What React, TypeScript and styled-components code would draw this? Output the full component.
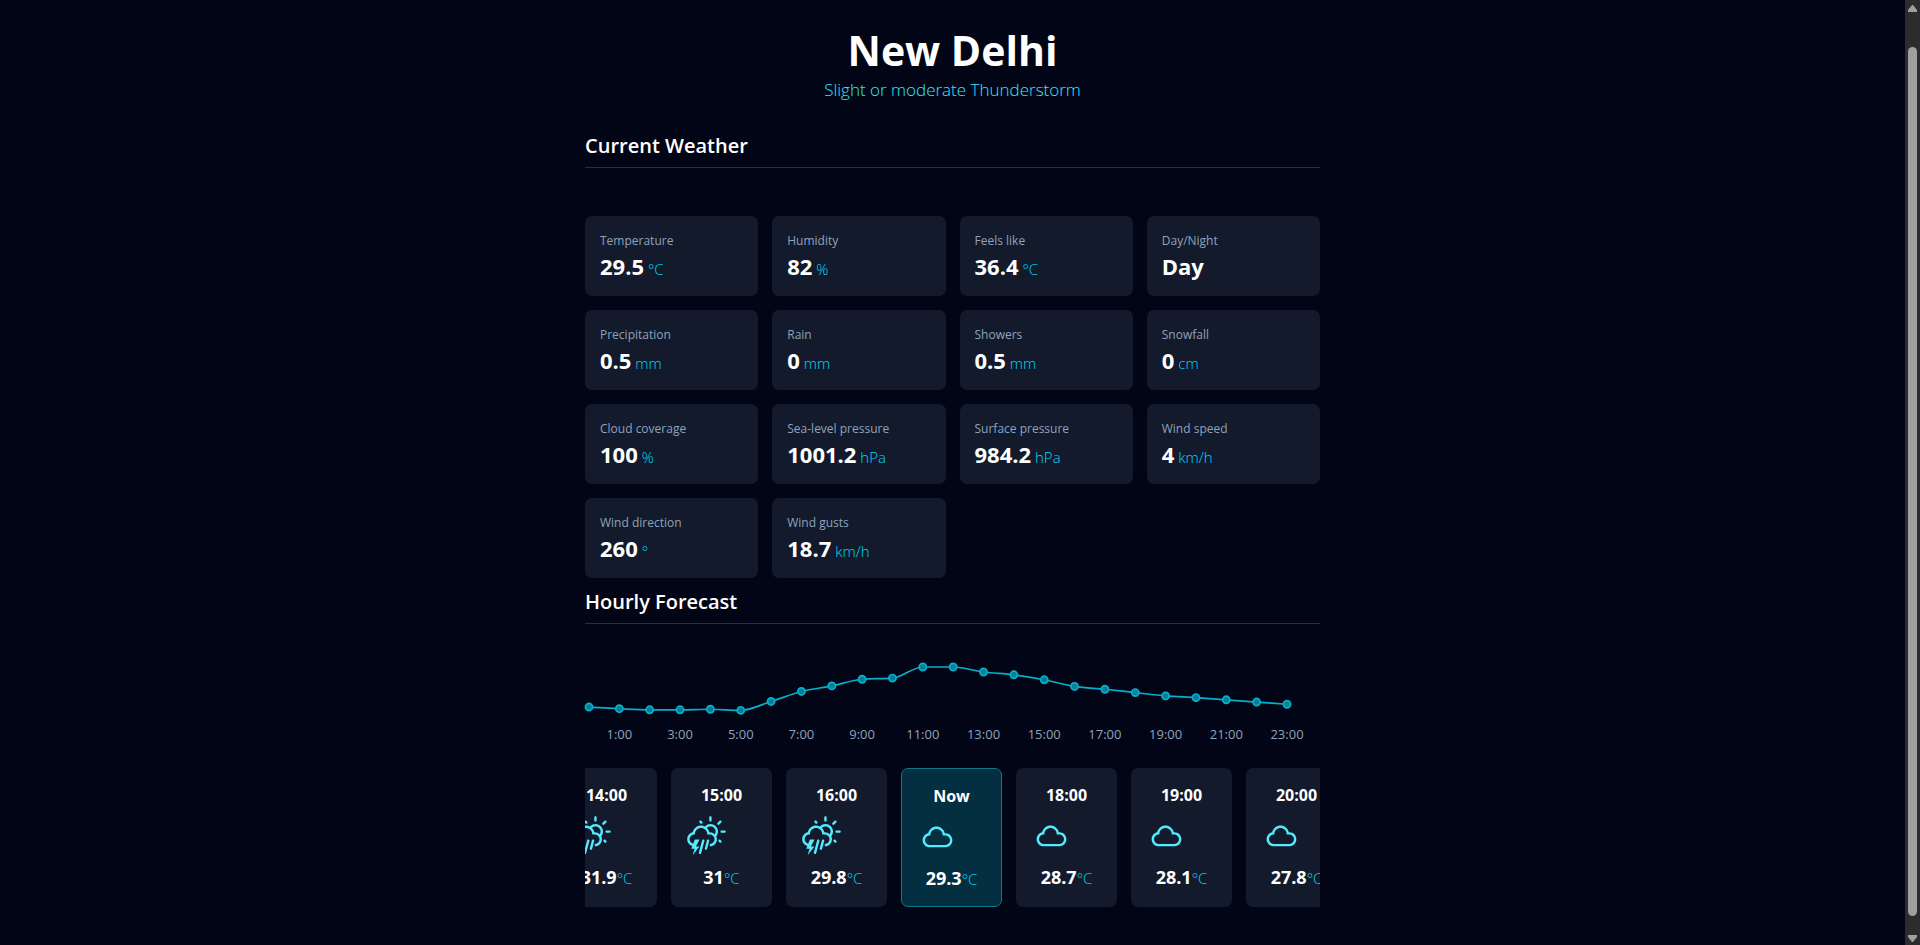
import { useLayoutEffect, useRef } from 'react';
import styled, { createGlobalStyle } from 'styled-components';
import { WiCloud, WiDayThunderstorm } from 'react-icons/wi';

const GlobalStyle = createGlobalStyle`
  *, *::before, *::after { box-sizing: border-box; }
  html, body { margin: 0; background: #020515; }
  body {
    font-family: 'Segoe UI', 'Open Sans', 'Noto Sans', sans-serif;
    color: #fff;
  }
  h1, h2, h3, p, dl, dt, dd, ul { margin: 0; padding: 0; }
`;

const Shell = styled.div`
  display: flex;
  min-height: 100vh;
`;

const Page = styled.main`
  flex: 1;
  min-width: 0;
  padding: 20px 16px 38px;
`;

const Content = styled.div`
  max-width: 735px;
  margin: 0 auto;
`;

const Hero = styled.header`
  text-align: center;
  margin-bottom: 28px;
`;

const City = styled.h1`
  font-size: 41px;
  line-height: 60px;
  font-weight: 700;
`;

const Summary = styled.p`
  font-size: 17px;
  line-height: 20px;
  font-weight: 300;
  color: #2fe8ff;
`;

const SectionTitle = styled.h2`
  font-size: 20px;
  line-height: 36px;
  height: 40px;
  font-weight: 600;
  border-bottom: 1px solid #053f4e;
`;

const MetricGrid = styled.dl`
  display: grid;
  grid-template-columns: repeat(4, 1fr);
  gap: 14px;
  padding: 48px 0 6px;

  @media (max-width: 640px) {
    grid-template-columns: repeat(2, 1fr);
  }
`;

const Metric = styled.div`
  background: #121a2c;
  border-radius: 7px;
  padding: 15px;
`;

const MetricLabel = styled.dt`
  font-size: 12px;
  line-height: 20px;
  color: #8fa3bc;
`;

const MetricValue = styled.dd`
  font-size: 22px;
  line-height: 30px;
  font-weight: 700;
`;

const Unit = styled.span`
  font-size: 15px;
  line-height: 1;
  font-weight: 300;
  color: #00d8fa;
`;

const Chart = styled.svg`
  display: block;
  width: 100%;
  height: auto;
  margin: 20px 0;
  overflow: visible;
`;

const ChartLine = styled.path`
  fill: none;
  stroke: #06b0cc;
  stroke-width: 1.7;
`;

const ChartDot = styled.circle`
  fill: #067f96;
  stroke: #06b0cc;
  stroke-width: 1.7;
`;

const ChartTick = styled.text`
  font-size: 13px;
  fill: #8fa3bc;
  text-anchor: middle;
`;

const HourStrip = styled.ul`
  display: flex;
  gap: 14px;
  overflow-x: auto;
  scrollbar-width: none;
  list-style: none;
`;

const HourCard = styled.li<{ $now?: boolean }>`
  flex: 0 0 101px;
  padding: 14px;
  border-radius: 7px;
  text-align: center;
  border: ${({ $now }) => ($now ? '1px solid #067a8c' : '0')};
  background: ${({ $now }) => ($now ? '#032f41' : '#121a2c')};
`;

const HourTime = styled.h3`
  font-size: 16px;
  line-height: 26px;
  font-weight: 700;
`;

const HourIcon = styled.div`
  display: flex;
  height: 56px;
  align-items: center;
  color: #53eafd;
`;

const HourTemp = styled.p`
  font-size: 18px;
  line-height: 27px;
  font-weight: 700;
`;

const ScrollRail = styled.div`
  flex: 0 0 15px;
  display: flex;
  flex-direction: column;
  align-items: center;
  justify-content: space-between;
  padding: 5px 0 3px;
  background: #2c2c2c;
`;

const ScrollThumb = styled.div`
  flex: 1;
  width: 9px;
  margin: 35px 0 19px;
  border-radius: 5px;
  background: #9f9f9f;
`;

const metrics: { label: string; value: string; unit?: string }[] = [
  { label: 'Temperature', value: '29.5', unit: '°C' },
  { label: 'Humidity', value: '82', unit: '%' },
  { label: 'Feels like', value: '36.4', unit: '°C' },
  { label: 'Day/Night', value: 'Day' },
  { label: 'Precipitation', value: '0.5', unit: 'mm' },
  { label: 'Rain', value: '0', unit: 'mm' },
  { label: 'Showers', value: '0.5', unit: 'mm' },
  { label: 'Snowfall', value: '0', unit: 'cm' },
  { label: 'Cloud coverage', value: '100', unit: '%' },
  { label: 'Sea-level pressure', value: '1001.2', unit: 'hPa' },
  { label: 'Surface pressure', value: '984.2', unit: 'hPa' },
  { label: 'Wind speed', value: '4', unit: 'km/h' },
  { label: 'Wind direction', value: '260', unit: '°' },
  { label: 'Wind gusts', value: '18.7', unit: 'km/h' },
];

const temperatures = [
  26.1, 25.8, 25.6, 25.6, 25.7, 25.5, 27.1, 28.9, 29.9, 31.1, 31.3, 33.3,
  33.3, 32.4, 31.9, 31, 29.8, 29.3, 28.7, 28.1, 27.8, 27.4, 27, 26.6,
];

const hours = [
  { time: '14:00', temp: 31.9, Icon: WiDayThunderstorm },
  { time: '15:00', temp: 31, Icon: WiDayThunderstorm },
  { time: '16:00', temp: 29.8, Icon: WiDayThunderstorm },
  { time: 'Now', temp: 29.3, Icon: WiCloud },
  { time: '18:00', temp: 28.7, Icon: WiCloud },
  { time: '19:00', temp: 28.1, Icon: WiCloud },
  { time: '20:00', temp: 27.8, Icon: WiCloud },
];

const STRIP_SCROLL = 29;

type Point = { x: number; y: number };

const points: Point[] = temperatures.map((t, i) => ({
  x: 4 + (i * 698) / 23,
  y: 23 + (33.3 - t) * 5.56,
}));

// Monotone cubic interpolation, so the curve never overshoots a reading.
function monotonePath(pts: Point[]): string {
  const slope = (a: Point, b: Point) => (b.y - a.y) / (b.x - a.x);
  const tangents = pts.map((p, i) => {
    if (i === 0) return slope(p, pts[1]);
    if (i === pts.length - 1) return slope(pts[i - 1], p);
    const before = slope(pts[i - 1], p);
    const after = slope(p, pts[i + 1]);
    if (before * after <= 0) return 0;
    const mean = (before + after) / 2;
    return Math.sign(mean) * Math.min(Math.abs(before), Math.abs(after), Math.abs(mean) / 2) * 2;
  });
  return pts.slice(1).reduce((d, p, i) => {
    const prev = pts[i];
    const third = (p.x - prev.x) / 3;
    return `${d}C${prev.x + third},${prev.y + third * tangents[i]} ${p.x - third},${p.y - third * tangents[i + 1]} ${p.x},${p.y}`;
  }, `M${pts[0].x},${pts[0].y}`);
}

function TemperatureChart() {
  return (
    <Chart viewBox="0 0 735 104" role="img" aria-label="Hourly temperature">
      <ChartLine d={monotonePath(points)} />
      {points.map((p, i) => (
        <ChartDot key={i} cx={p.x} cy={p.y} r={3.6} />
      ))}
      {points.map((p, i) =>
        i % 2 === 1 ? (
          <ChartTick key={i} x={p.x} y={95}>{`${i}:00`}</ChartTick>
        ) : null,
      )}
    </Chart>
  );
}

function HourlyStrip() {
  const strip = useRef<HTMLUListElement>(null);
  useLayoutEffect(() => {
    if (strip.current) strip.current.scrollLeft = STRIP_SCROLL;
  }, []);
  return (
    <HourStrip ref={strip}>
      {hours.map(({ time, temp, Icon }) => (
        <HourCard key={time} $now={time === 'Now'}>
          <HourTime>{time}</HourTime>
          <HourIcon>
            <Icon size={43} />
          </HourIcon>
          <HourTemp>
            {temp}
            <Unit>°C</Unit>
          </HourTemp>
        </HourCard>
      ))}
    </HourStrip>
  );
}

export default function App() {
  return (
    <>
      <GlobalStyle />
      <Shell>
        <Page>
          <Content>
            <Hero>
              <City>New Delhi</City>
              <Summary>Slight or moderate Thunderstorm</Summary>
            </Hero>
            <section>
              <SectionTitle>Current Weather</SectionTitle>
              <MetricGrid>
                {metrics.map(({ label, value, unit }) => (
                  <Metric key={label}>
                    <MetricLabel>{label}</MetricLabel>
                    <MetricValue>
                      {value}
                      {unit && <Unit> {unit}</Unit>}
                    </MetricValue>
                  </Metric>
                ))}
              </MetricGrid>
            </section>
            <section>
              <SectionTitle>Hourly Forecast</SectionTitle>
              <TemperatureChart />
              <HourlyStrip />
            </section>
          </Content>
        </Page>
        <ScrollRail aria-hidden="true">
          <svg width="9" height="7" viewBox="0 0 9 7" fill="#9f9f9f">
            <path d="M4 0h1l4 5v2H0V5z" />
          </svg>
          <ScrollThumb />
          <svg width="9" height="7" viewBox="0 0 9 7" fill="#9f9f9f">
            <path d="M0 0h9v2L5 7H4L0 2z" />
          </svg>
        </ScrollRail>
      </Shell>
    </>
  );
}
